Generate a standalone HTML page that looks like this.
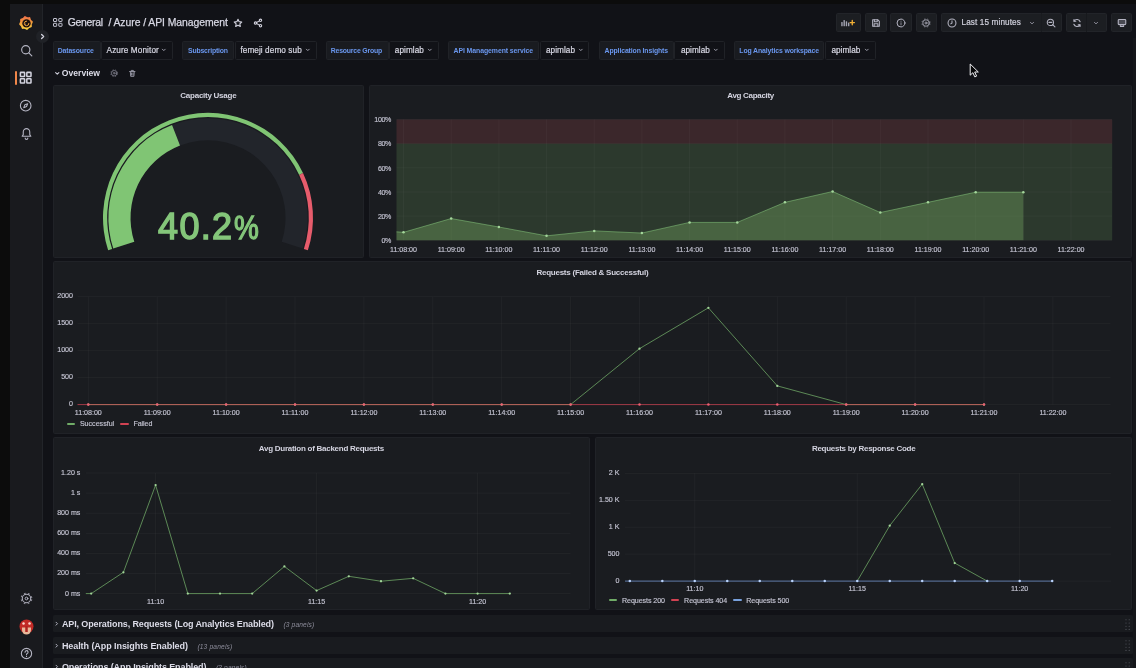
<!DOCTYPE html>
<html lang="en"><head><meta charset="utf-8"><title>Azure / API Management - Grafana</title>
<style>
html,body{margin:0;padding:0;background:#0c0c0c;}
body{width:1136px;height:668px;overflow:hidden;position:relative;font-family:"Liberation Sans", sans-serif;}
.b{position:absolute;display:block;}
.t{position:absolute;white-space:pre;font-family:"Liberation Sans", sans-serif;}
svg{overflow:visible}
</style></head>
<body>
<div id="app" style="position:absolute;left:0;top:0;width:1136px;height:668px;will-change:transform;">
<!-- app frame -->
<div class="b" style="left:10px;top:4px;width:1126px;height:664px;background:#111217;"></div>
<div class="b" style="left:1133px;top:38px;width:3px;height:630px;background:#15161a;"></div>
<div class="b" style="left:10px;top:4px;width:33px;height:664px;background:#191a1e;border-right:1px solid #222429;box-sizing:border-box;"></div>
<svg class="b" style="left:19.3px;top:15.9px" width="14" height="14" viewBox="0 0 28 28">
<defs><linearGradient id="lg" x1="0" y1="0" x2="0" y2="1"><stop offset="0" stop-color="#ee6f4c"/><stop offset="0.450" stop-color="#f39a3c"/><stop offset="1" stop-color="#fbd63f"/></linearGradient></defs>
<path fill="url(#lg)" d="M9.67 1.79Q11.36 -0.97 13.89 1.05Q16.42 3.07 19.57 2.31Q22.72 1.55 23.08 4.77Q23.45 7.98 26.21 9.67Q28.97 11.36 26.95 13.89Q24.93 16.42 25.69 19.57Q26.45 22.72 23.23 23.08Q20.02 23.45 18.33 26.21Q16.64 28.97 14.11 26.95Q11.58 24.93 8.43 25.69Q5.28 26.45 4.92 23.23Q4.55 20.02 1.79 18.33Q-0.97 16.64 1.05 14.11Q3.07 11.58 2.31 8.43Q1.55 5.28 4.77 4.92Q7.98 4.55 9.67 1.79Z"/>
<circle cx="15" cy="14.800" r="8.400" fill="#1d120f"/>
<path d="M15.200 10.200a4.600 4.600 0 1 0 4.600 4.600" fill="none" stroke="#f5a93b" stroke-width="1.900" stroke-linecap="round"/>
<circle cx="13" cy="16" r="0.900" fill="#e9c9c0"/>
</svg>
<div class="b" style="left:36px;top:29.500px;width:13px;height:13px;border-radius:50%;background:#202227;"></div>
<svg class="b" style="left:39px;top:32.5px" width="7" height="7" viewBox="0 0 24 24" fill="none" stroke="#d4d4e0" stroke-width="4.29" stroke-linecap="round" stroke-linejoin="round"><path d="M9 5l7 7-7 7"/></svg>
<svg class="b" style="left:19.5px;top:43.8px" width="13.2" height="13.2" viewBox="0 0 24 24" fill="none" stroke="#b4b4c2" stroke-width="2.09" stroke-linecap="round" stroke-linejoin="round"><circle cx="10.500" cy="10.500" r="7.500"/><path d="M16 16l5.500 5.500"/></svg>
<div class="b" style="left:15px;top:71px;width:2px;height:14px;background:#f2874a;border-radius:1px;"></div>
<svg class="b" style="left:19.4px;top:71.3px" width="13.4" height="13.4" viewBox="0 0 24 24" fill="none" stroke="#d2d2de" stroke-width="2.78" stroke-linecap="round" stroke-linejoin="round"><rect x="2.500" y="2.500" width="7.500" height="7.500" rx="1"/><rect x="14" y="2.500" width="7.500" height="7.500" rx="1"/><rect x="2.500" y="14" width="7.500" height="7.500" rx="1"/><rect x="14" y="14" width="7.500" height="7.500" rx="1"/></svg>
<svg class="b" style="left:19.4px;top:99.0px" width="13.4" height="13.4" viewBox="0 0 24 24" fill="none" stroke="#b4b4c2" stroke-width="1.97" stroke-linecap="round" stroke-linejoin="round"><circle cx="12" cy="12" r="9.500"/><path d="M15.500 8.500l-2 5-5 2 2-5z"/></svg>
<svg class="b" style="left:20px;top:127px" width="13" height="13" viewBox="0 0 24 24" fill="none" stroke="#b4b4c2" stroke-width="2.03" stroke-linecap="round" stroke-linejoin="round"><path d="M12 3a6 6 0 0 0-6 6v5l-2 3h16l-2-3V9a6 6 0 0 0-6-6z"/><path d="M9.500 20.500a2.500 2.500 0 0 0 5 0"/></svg>
<svg class="b" style="left:20px;top:591.5px" width="13" height="13" viewBox="0 0 24 24" fill="none" stroke="#b4b4c2" stroke-width="2.03" stroke-linecap="round" stroke-linejoin="round"><circle cx="12" cy="12" r="9.800" stroke-width="2" stroke-dasharray="3.300 4.397" stroke-linecap="butt" stroke-opacity="0.750" transform="rotate(10 12 12)"/><circle cx="12" cy="12" r="7.800" stroke-width="1.900"/><circle cx="12" cy="12" r="2.500" stroke-width="1.800"/></svg>
<svg class="b" style="left:19px;top:619px" width="15" height="15" viewBox="0 0 30 30">
<circle cx="15" cy="15" r="14" fill="#c22a26"/>
<path d="M6 17h18v5a9 9 0 0 1-18 0z" fill="#e9b79a"/>
<rect x="12.500" y="14" width="5" height="12" fill="#b02420"/>
<circle cx="9" cy="9" r="2.500" fill="#ffd9cf"/><circle cx="21" cy="9" r="2.500" fill="#ffd9cf"/>
</svg>
<svg class="b" style="left:20px;top:647px" width="13" height="13" viewBox="0 0 24 24" fill="none" stroke="#b4b4c2" stroke-width="2.03" stroke-linecap="round" stroke-linejoin="round"><circle cx="12" cy="12" r="9.500"/><path d="M9.300 9.500a2.800 2.800 0 1 1 4 2.600c-.9.500-1.300 1-1.300 2"/><path d="M12 17.300v.2"/></svg>
<svg class="b" style="left:53px;top:18px" width="10" height="9" viewBox="0 0 10 9" fill="none" stroke="#c4c4d2" stroke-width="1"><rect x="0.500" y="0.500" width="3.200" height="3" rx="0.400"/><rect x="5.800" y="0.500" width="3.200" height="3" rx="0.400"/><rect x="0.500" y="5.300" width="3.200" height="3" rx="0.400"/><rect x="5.800" y="5.300" width="3.200" height="3" rx="0.400"/></svg>
<span class="t" style="left:67.70px;top:15.98px;font-size:10.4px;line-height:13.0px;color:#d8d8e4;-webkit-text-stroke:0.25px #d8d8e4;letter-spacing:-0.281px;">General</span>
<span class="t" style="left:108.40px;top:15.98px;font-size:10.4px;line-height:13.0px;color:#d8d8e4;-webkit-text-stroke:0.25px #d8d8e4;letter-spacing:-0.055px;">/ Azure / API Management</span>
<svg class="b" style="left:233px;top:17.5px" width="10" height="10" viewBox="0 0 24 24" fill="none" stroke="#d0d0dc" stroke-width="2.64" stroke-linecap="round" stroke-linejoin="round"><path d="M12 3l2.700 5.800 6.300.8-4.600 4.400 1.200 6.300L12 17.200 6.400 20.300l1.200-6.300L3 9.600l6.300-.8z"/></svg>
<svg class="b" style="left:252.5px;top:17.5px" width="10" height="10" viewBox="0 0 24 24" fill="none" stroke="#d0d0dc" stroke-width="2.64" stroke-linecap="round" stroke-linejoin="round"><circle cx="18" cy="5.500" r="2.800"/><circle cx="6" cy="12" r="2.800"/><circle cx="18" cy="18.500" r="2.800"/><path d="M8.500 10.700l7-3.800M8.500 13.300l7 3.800"/></svg>
<div class="b" style="left:836px;top:13px;width:24.5px;height:19px;background:#1c1e22;border:1px solid #222429;box-sizing:border-box;border-radius:1.5px;"></div>
<div class="b" style="left:865px;top:13px;width:21.5px;height:19px;background:#1c1e22;border:1px solid #222429;box-sizing:border-box;border-radius:1.5px;"></div>
<div class="b" style="left:890px;top:13px;width:21.5px;height:19px;background:#1c1e22;border:1px solid #222429;box-sizing:border-box;border-radius:1.5px;"></div>
<div class="b" style="left:915.5px;top:13px;width:21.5px;height:19px;background:#1c1e22;border:1px solid #222429;box-sizing:border-box;border-radius:1.5px;"></div>
<svg class="b" style="left:841px;top:19px" width="14" height="8" viewBox="0 0 28 16"><g fill="#a4a4b2"><rect x="0.500" y="6" width="2.800" height="8.500" rx="1"/><rect x="5" y="2" width="2.800" height="12.500" rx="1"/><rect x="9.500" y="4.500" width="2.800" height="10" rx="1"/><rect x="14" y="7" width="2.800" height="7.500" rx="1"/></g><path d="M22.500 3v8.500M18.300 7.200h8.500" stroke="#f2b035" stroke-width="2.700" stroke-linecap="round"/></svg>
<svg class="b" style="left:870.5px;top:17.5px" width="10" height="10" viewBox="0 0 24 24" fill="none" stroke="#b4b4c2" stroke-width="2.52" stroke-linecap="round" stroke-linejoin="round"><path d="M4 4h12l4 4v12H4z"/><path d="M8 4v5h7V4M7.500 20v-6h9v6"/></svg>
<svg class="b" style="left:895.5px;top:17.5px" width="10" height="10" viewBox="0 0 24 24" fill="none" stroke="#b4b4c2" stroke-width="2.40" stroke-linecap="round" stroke-linejoin="round"><circle cx="12" cy="12" r="9.500"/><path d="M12 11.500v5" stroke-width="1.700"/><path d="M12 7.600v.1" stroke-width="2.100"/></svg>
<svg class="b" style="left:921px;top:17.5px" width="10" height="10" viewBox="0 0 24 24" fill="none" stroke="#b4b4c2" stroke-width="2.52" stroke-linecap="round" stroke-linejoin="round"><circle cx="12" cy="12" r="9.800" stroke-width="2" stroke-dasharray="3.300 4.397" stroke-linecap="butt" stroke-opacity="0.750" transform="rotate(10 12 12)"/><circle cx="12" cy="12" r="7.800" stroke-width="1.900"/><circle cx="12" cy="12" r="2.500" stroke-width="1.800"/></svg>
<div class="b" style="left:941px;top:13px;width:121px;height:19px;background:#1c1e22;border:1px solid #222429;box-sizing:border-box;border-radius:1.5px;"></div>
<div class="b" style="left:1041px;top:13px;width:1px;height:19px;background:#191b1f;"></div>
<svg class="b" style="left:946.5px;top:17.5px" width="10" height="10" viewBox="0 0 24 24" fill="none" stroke="#b4b4c2" stroke-width="2.52" stroke-linecap="round" stroke-linejoin="round"><circle cx="12" cy="12" r="9.500"/><path d="M12 6.500V12l-3 2"/></svg>
<span class="t" style="left:961.50px;top:17.98px;font-size:8.2px;line-height:10.25px;color:#d0d0dc;-webkit-text-stroke:0.2px #d0d0dc;letter-spacing:0.113px;">Last 15 minutes</span>
<svg class="b" style="left:1028.5px;top:19.6px" width="6.0" height="6.0" viewBox="0 0 24 24" fill="none" stroke="#9c9caa" stroke-width="3.80" stroke-linecap="round" stroke-linejoin="round"><path d="M6 9.500l6 6 6-6"/></svg>
<svg class="b" style="left:1046px;top:17.5px" width="10" height="10" viewBox="0 0 24 24" fill="none" stroke="#b4b4c2" stroke-width="2.52" stroke-linecap="round" stroke-linejoin="round"><circle cx="10.500" cy="10.500" r="7.500"/><path d="M16 16l5.500 5.500M7 10.500h7"/></svg>
<div class="b" style="left:1066px;top:13px;width:40.5px;height:19px;background:#1c1e22;border:1px solid #222429;box-sizing:border-box;border-radius:1.5px;"></div>
<div class="b" style="left:1086px;top:13px;width:1px;height:19px;background:#17191d;"></div>
<svg class="b" style="left:1071.5px;top:17.5px" width="10" height="10" viewBox="0 0 24 24" fill="none" stroke="#b4b4c2" stroke-width="2.76" stroke-linecap="round" stroke-linejoin="round"><path d="M19.500 9A8 8 0 0 0 5 7.500M4.500 15A8 8 0 0 0 19 16.500"/><path d="M4.800 3.500v4.300h4.300M19.200 20.500v-4.300h-4.300"/></svg>
<svg class="b" style="left:1093.3px;top:19.6px" width="6.0" height="6.0" viewBox="0 0 24 24" fill="none" stroke="#9c9caa" stroke-width="3.80" stroke-linecap="round" stroke-linejoin="round"><path d="M6 9.500l6 6 6-6"/></svg>
<div class="b" style="left:1111px;top:13px;width:21px;height:19px;background:#1c1e22;border:1px solid #222429;box-sizing:border-box;border-radius:1.5px;"></div>
<svg class="b" style="left:1116.5px;top:17.5px" width="10" height="10" viewBox="0 0 24 24" fill="none" stroke="#b4b4c2" stroke-width="2.64" stroke-linecap="round" stroke-linejoin="round"><rect x="3" y="3.500" width="18" height="12.500" rx="2" fill="#b4b4c2" fill-opacity="0.300"/><path d="M8 20.500h8M9.500 16l-1 4.500M14.500 16l1 4.500"/></svg>
<div class="b" style="left:52.5px;top:41.3px;width:48px;height:18.3px;background:#191b20;border:1px solid #202227;box-sizing:border-box;border-radius:1.5px;"></div><span class="t" style="left:57.80px;top:46.98px;font-size:6.9px;line-height:8.62px;color:#6a97ee;font-weight:700;letter-spacing:-0.155px;">Datasource</span><div class="b" style="left:101px;top:41.3px;width:72px;height:18.3px;background:#111217;border:1px solid #202227;box-sizing:border-box;border-radius:1.5px;"></div><span class="t" style="left:106.60px;top:45.98px;font-size:8.2px;line-height:10.25px;color:#d8d8e4;-webkit-text-stroke:0.2px #d8d8e4;letter-spacing:0.102px;">Azure Monitor</span><svg class="b" style="left:161.1px;top:47.4px" width="5.6" height="5.6" viewBox="0 0 24 24" fill="none" stroke="#a4a4b2" stroke-width="4.07" stroke-linecap="round" stroke-linejoin="round"><path d="M6 9.500l6 6 6-6"/></svg>
<div class="b" style="left:182px;top:41.3px;width:52px;height:18.3px;background:#191b20;border:1px solid #202227;box-sizing:border-box;border-radius:1.5px;"></div><span class="t" style="left:188.00px;top:46.98px;font-size:6.9px;line-height:8.62px;color:#6a97ee;font-weight:700;letter-spacing:-0.185px;">Subscription</span><div class="b" style="left:234.5px;top:41.3px;width:82.5px;height:18.3px;background:#111217;border:1px solid #202227;box-sizing:border-box;border-radius:1.5px;"></div><span class="t" style="left:240.40px;top:45.98px;font-size:8.2px;line-height:10.25px;color:#d8d8e4;-webkit-text-stroke:0.2px #d8d8e4;letter-spacing:0.088px;">femeji demo sub</span><svg class="b" style="left:304.5px;top:47.4px" width="5.6" height="5.6" viewBox="0 0 24 24" fill="none" stroke="#a4a4b2" stroke-width="4.07" stroke-linecap="round" stroke-linejoin="round"><path d="M6 9.500l6 6 6-6"/></svg>
<div class="b" style="left:325.5px;top:41.3px;width:63px;height:18.3px;background:#191b20;border:1px solid #202227;box-sizing:border-box;border-radius:1.5px;"></div><span class="t" style="left:330.80px;top:46.98px;font-size:6.9px;line-height:8.62px;color:#6a97ee;font-weight:700;letter-spacing:-0.200px;">Resource Group</span><div class="b" style="left:389px;top:41.3px;width:49.5px;height:18.3px;background:#111217;border:1px solid #202227;box-sizing:border-box;border-radius:1.5px;"></div><span class="t" style="left:394.80px;top:45.98px;font-size:8.2px;line-height:10.25px;color:#d8d8e4;-webkit-text-stroke:0.2px #d8d8e4;letter-spacing:0.059px;">apimlab</span><svg class="b" style="left:426.7px;top:47.4px" width="5.6" height="5.6" viewBox="0 0 24 24" fill="none" stroke="#a4a4b2" stroke-width="4.07" stroke-linecap="round" stroke-linejoin="round"><path d="M6 9.500l6 6 6-6"/></svg>
<div class="b" style="left:447.5px;top:41.3px;width:91.5px;height:18.3px;background:#191b20;border:1px solid #202227;box-sizing:border-box;border-radius:1.5px;"></div><span class="t" style="left:453.50px;top:46.98px;font-size:6.9px;line-height:8.62px;color:#6a97ee;font-weight:700;letter-spacing:-0.073px;">API Management service</span><div class="b" style="left:539.5px;top:41.3px;width:49.5px;height:18.3px;background:#111217;border:1px solid #202227;box-sizing:border-box;border-radius:1.5px;"></div><span class="t" style="left:546.00px;top:45.98px;font-size:8.2px;line-height:10.25px;color:#d8d8e4;-webkit-text-stroke:0.2px #d8d8e4;letter-spacing:0.059px;">apimlab</span><svg class="b" style="left:577.8px;top:47.4px" width="5.6" height="5.6" viewBox="0 0 24 24" fill="none" stroke="#a4a4b2" stroke-width="4.07" stroke-linecap="round" stroke-linejoin="round"><path d="M6 9.500l6 6 6-6"/></svg>
<div class="b" style="left:599px;top:41.3px;width:74.5px;height:18.3px;background:#191b20;border:1px solid #202227;box-sizing:border-box;border-radius:1.5px;"></div><span class="t" style="left:604.60px;top:46.98px;font-size:6.9px;line-height:8.62px;color:#6a97ee;font-weight:700;letter-spacing:-0.123px;">Application Insights</span><div class="b" style="left:674.2px;top:41.3px;width:50.5px;height:18.3px;background:#111217;border:1px solid #202227;box-sizing:border-box;border-radius:1.5px;"></div><span class="t" style="left:680.90px;top:45.98px;font-size:8.2px;line-height:10.25px;color:#d8d8e4;-webkit-text-stroke:0.2px #d8d8e4;letter-spacing:0.059px;">apimlab</span><svg class="b" style="left:713.2px;top:47.4px" width="5.6" height="5.6" viewBox="0 0 24 24" fill="none" stroke="#a4a4b2" stroke-width="4.07" stroke-linecap="round" stroke-linejoin="round"><path d="M6 9.500l6 6 6-6"/></svg>
<div class="b" style="left:734.3px;top:41.3px;width:90.2px;height:18.3px;background:#191b20;border:1px solid #202227;box-sizing:border-box;border-radius:1.5px;"></div><span class="t" style="left:739.30px;top:46.98px;font-size:6.9px;line-height:8.62px;color:#6a97ee;font-weight:700;letter-spacing:-0.120px;">Log Analytics workspace</span><div class="b" style="left:825.4px;top:41.3px;width:50.6px;height:18.3px;background:#111217;border:1px solid #202227;box-sizing:border-box;border-radius:1.5px;"></div><span class="t" style="left:831.40px;top:45.98px;font-size:8.2px;line-height:10.25px;color:#d8d8e4;-webkit-text-stroke:0.2px #d8d8e4;letter-spacing:0.059px;">apimlab</span><svg class="b" style="left:863.9px;top:47.4px" width="5.6" height="5.6" viewBox="0 0 24 24" fill="none" stroke="#a4a4b2" stroke-width="4.07" stroke-linecap="round" stroke-linejoin="round"><path d="M6 9.500l6 6 6-6"/></svg>
<svg class="b" style="left:53.6px;top:70.1px" width="6.5" height="6.5" viewBox="0 0 24 24" fill="none" stroke="#d0d0dc" stroke-width="4.06" stroke-linecap="round" stroke-linejoin="round"><path d="M6 9.500l6 6 6-6"/></svg>
<span class="t" style="left:61.80px;top:67.97px;font-size:8.6px;line-height:10.75px;color:#dcdce8;font-weight:700;letter-spacing:-0.002px;">Overview</span>
<svg class="b" style="left:110px;top:69.0px" width="8.4" height="8.4" viewBox="0 0 24 24" fill="none" stroke="#9696a4" stroke-width="2.71" stroke-linecap="round" stroke-linejoin="round"><circle cx="12" cy="12" r="9.800" stroke-width="2" stroke-dasharray="3.300 4.397" stroke-linecap="butt" stroke-opacity="0.750" transform="rotate(10 12 12)"/><circle cx="12" cy="12" r="7.800" stroke-width="1.900"/><circle cx="12" cy="12" r="2.500" stroke-width="1.800"/></svg>
<svg class="b" style="left:128.4px;top:69.0px" width="8.6" height="8.6" viewBox="0 0 24 24" fill="none" stroke="#9696a4" stroke-width="2.65" stroke-linecap="round" stroke-linejoin="round"><path d="M4.500 7h15M9 7V4h6v3M6.500 7l1 13.500h9l1-13.500M10 11v6M14 11v6"/></svg>
<!-- Capacity Usage -->
<div class="b" style="left:52.5px;top:85.2px;width:311.7px;height:173.2px;background:#1a1c20;border:1px solid #202227;box-sizing:border-box;border-radius:1.5px;"></div><span class="t" style="left:180.35px;top:90.97px;font-size:8.0px;line-height:10.0px;color:#d4d4e0;font-weight:700;letter-spacing:-0.257px;">Capacity Usage</span>
<svg class="b" style="left:0px;top:0px;" width="1136" height="668" viewBox="0 0 1136 668"><path fill="#80c574" d="M108.14 250.25A105.0 105.0 0 0 1 303.01 173.09L299.21 174.88A100.8 100.8 0 0 0 112.13 248.95Z"/><path fill="#e75c6c" d="M303.01 173.09A105.0 105.0 0 0 1 307.86 250.25L303.87 248.95A100.8 100.8 0 0 0 299.21 174.88Z"/><path fill="#22252b" d="M113.27 248.58A99.6 99.6 0 1 1 302.73 248.58L281.71 241.75A77.5 77.5 0 1 0 134.29 241.75Z"/><path fill="#80c574" d="M113.27 248.58A99.6 99.6 0 0 1 172.03 124.92L180.01 145.53A77.5 77.5 0 0 0 134.29 241.75Z"/></svg>
<span class="t" style="left:158.1px;top:204.2px;font-size:36px;line-height:45px;color:#84c67a;letter-spacing:1.3px;-webkit-text-stroke:1.4px #84c67a;">40.2</span>
<span class="t" style="left:234.2px;top:204.2px;font-size:36px;line-height:45px;color:#84c67a;-webkit-text-stroke:1.4px #84c67a;transform:scale(0.775,0.92);transform-origin:0 36px;">%</span>
<!-- Avg Capacity -->
<div class="b" style="left:369px;top:85.2px;width:763.3px;height:173.2px;background:#1a1c20;border:1px solid #202227;box-sizing:border-box;border-radius:1.5px;"></div><span class="t" style="left:727.30px;top:90.97px;font-size:8.0px;line-height:10.0px;color:#d4d4e0;font-weight:700;letter-spacing:-0.308px;">Avg Capacity</span>
<svg class="b" style="left:0px;top:0px;" width="1136" height="668" viewBox="0 0 1136 668"><rect x="396.5" y="119.5" width="715.7" height="24.16" fill="#e85f66" fill-opacity="0.165"/><rect x="396.5" y="143.66" width="715.7" height="96.64" fill="#78b267" fill-opacity="0.195"/><path d="M396.5 240.30H1112.2" stroke="rgba(204,204,220,0.045)" stroke-width="1"/><path d="M396.5 216.14H1112.2" stroke="rgba(204,204,220,0.045)" stroke-width="1"/><path d="M396.5 191.98H1112.2" stroke="rgba(204,204,220,0.045)" stroke-width="1"/><path d="M396.5 167.82H1112.2" stroke="rgba(204,204,220,0.045)" stroke-width="1"/><path d="M396.5 143.66H1112.2" stroke="rgba(204,204,220,0.045)" stroke-width="1"/><path d="M396.5 119.50H1112.2" stroke="rgba(204,204,220,0.045)" stroke-width="1"/><path d="M403.50 119.5V240.3" stroke="rgba(204,204,220,0.045)" stroke-width="1"/><path d="M451.18 119.5V240.3" stroke="rgba(204,204,220,0.045)" stroke-width="1"/><path d="M498.86 119.5V240.3" stroke="rgba(204,204,220,0.045)" stroke-width="1"/><path d="M546.54 119.5V240.3" stroke="rgba(204,204,220,0.045)" stroke-width="1"/><path d="M594.22 119.5V240.3" stroke="rgba(204,204,220,0.045)" stroke-width="1"/><path d="M641.90 119.5V240.3" stroke="rgba(204,204,220,0.045)" stroke-width="1"/><path d="M689.58 119.5V240.3" stroke="rgba(204,204,220,0.045)" stroke-width="1"/><path d="M737.26 119.5V240.3" stroke="rgba(204,204,220,0.045)" stroke-width="1"/><path d="M784.94 119.5V240.3" stroke="rgba(204,204,220,0.045)" stroke-width="1"/><path d="M832.62 119.5V240.3" stroke="rgba(204,204,220,0.045)" stroke-width="1"/><path d="M880.30 119.5V240.3" stroke="rgba(204,204,220,0.045)" stroke-width="1"/><path d="M927.98 119.5V240.3" stroke="rgba(204,204,220,0.045)" stroke-width="1"/><path d="M975.66 119.5V240.3" stroke="rgba(204,204,220,0.045)" stroke-width="1"/><path d="M1023.34 119.5V240.3" stroke="rgba(204,204,220,0.045)" stroke-width="1"/><path d="M1071.02 119.5V240.3" stroke="rgba(204,204,220,0.045)" stroke-width="1"/><path d="M396.50 231.84L403.50 232.33L451.18 218.56L498.86 227.01L546.54 235.83L594.22 230.88L641.90 233.05L689.58 222.42L737.26 222.42L784.94 202.37L832.62 191.50L880.30 212.52L927.98 202.37L975.66 192.22L1023.34 192.22L1023.34 240.3L396.5 240.3Z" fill="#86c26e" fill-opacity="0.31"/><path d="M396.50 231.84L403.50 232.33L451.18 218.56L498.86 227.01L546.54 235.83L594.22 230.88L641.90 233.05L689.58 222.42L737.26 222.42L784.94 202.37L832.62 191.50L880.30 212.52L927.98 202.37L975.66 192.22L1023.34 192.22" fill="none" stroke="#86c77c" stroke-width="0.9" stroke-linejoin="round" stroke-opacity="0.6"/><circle cx="403.50" cy="232.33" r="1.25" fill="#a4d79b"/><circle cx="451.18" cy="218.56" r="1.25" fill="#a4d79b"/><circle cx="498.86" cy="227.01" r="1.25" fill="#a4d79b"/><circle cx="546.54" cy="235.83" r="1.25" fill="#a4d79b"/><circle cx="594.22" cy="230.88" r="1.25" fill="#a4d79b"/><circle cx="641.90" cy="233.05" r="1.25" fill="#a4d79b"/><circle cx="689.58" cy="222.42" r="1.25" fill="#a4d79b"/><circle cx="737.26" cy="222.42" r="1.25" fill="#a4d79b"/><circle cx="784.94" cy="202.37" r="1.25" fill="#a4d79b"/><circle cx="832.62" cy="191.50" r="1.25" fill="#a4d79b"/><circle cx="880.30" cy="212.52" r="1.25" fill="#a4d79b"/><circle cx="927.98" cy="202.37" r="1.25" fill="#a4d79b"/><circle cx="975.66" cy="192.22" r="1.25" fill="#a4d79b"/><circle cx="1023.34" cy="192.22" r="1.25" fill="#a4d79b"/></svg>
<span class="t" style="left:381.56px;top:236.97px;font-size:7.1px;line-height:8.88px;color:#c4c4d2;-webkit-text-stroke:0.15px #c4c4d2;letter-spacing:-0.411px;">0%</span><span class="t" style="left:377.93px;top:212.97px;font-size:7.1px;line-height:8.88px;color:#c4c4d2;-webkit-text-stroke:0.15px #c4c4d2;letter-spacing:-0.379px;">20%</span><span class="t" style="left:377.93px;top:188.97px;font-size:7.1px;line-height:8.88px;color:#c4c4d2;-webkit-text-stroke:0.15px #c4c4d2;letter-spacing:-0.379px;">40%</span><span class="t" style="left:377.93px;top:164.97px;font-size:7.1px;line-height:8.88px;color:#c4c4d2;-webkit-text-stroke:0.15px #c4c4d2;letter-spacing:-0.379px;">60%</span><span class="t" style="left:377.93px;top:139.97px;font-size:7.1px;line-height:8.88px;color:#c4c4d2;-webkit-text-stroke:0.15px #c4c4d2;letter-spacing:-0.379px;">80%</span><span class="t" style="left:374.30px;top:115.98px;font-size:7.1px;line-height:8.88px;color:#c4c4d2;-webkit-text-stroke:0.15px #c4c4d2;letter-spacing:-0.363px;">100%</span><span class="t" style="left:390.00px;top:245.97px;font-size:7.1px;line-height:8.88px;color:#c4c4d2;-webkit-text-stroke:0.15px #c4c4d2;letter-spacing:-0.012px;">11:08:00</span><span class="t" style="left:437.68px;top:245.97px;font-size:7.1px;line-height:8.88px;color:#c4c4d2;-webkit-text-stroke:0.15px #c4c4d2;letter-spacing:-0.012px;">11:09:00</span><span class="t" style="left:485.36px;top:245.97px;font-size:7.1px;line-height:8.88px;color:#c4c4d2;-webkit-text-stroke:0.15px #c4c4d2;letter-spacing:-0.012px;">11:10:00</span><span class="t" style="left:533.04px;top:245.97px;font-size:7.1px;line-height:8.88px;color:#c4c4d2;-webkit-text-stroke:0.15px #c4c4d2;letter-spacing:0.055px;">11:11:00</span><span class="t" style="left:580.72px;top:245.97px;font-size:7.1px;line-height:8.88px;color:#c4c4d2;-webkit-text-stroke:0.15px #c4c4d2;letter-spacing:-0.012px;">11:12:00</span><span class="t" style="left:628.40px;top:245.97px;font-size:7.1px;line-height:8.88px;color:#c4c4d2;-webkit-text-stroke:0.15px #c4c4d2;letter-spacing:-0.012px;">11:13:00</span><span class="t" style="left:676.08px;top:245.97px;font-size:7.1px;line-height:8.88px;color:#c4c4d2;-webkit-text-stroke:0.15px #c4c4d2;letter-spacing:-0.012px;">11:14:00</span><span class="t" style="left:723.76px;top:245.97px;font-size:7.1px;line-height:8.88px;color:#c4c4d2;-webkit-text-stroke:0.15px #c4c4d2;letter-spacing:-0.012px;">11:15:00</span><span class="t" style="left:771.44px;top:245.97px;font-size:7.1px;line-height:8.88px;color:#c4c4d2;-webkit-text-stroke:0.15px #c4c4d2;letter-spacing:-0.012px;">11:16:00</span><span class="t" style="left:819.12px;top:245.97px;font-size:7.1px;line-height:8.88px;color:#c4c4d2;-webkit-text-stroke:0.15px #c4c4d2;letter-spacing:-0.012px;">11:17:00</span><span class="t" style="left:866.80px;top:245.97px;font-size:7.1px;line-height:8.88px;color:#c4c4d2;-webkit-text-stroke:0.15px #c4c4d2;letter-spacing:-0.012px;">11:18:00</span><span class="t" style="left:914.48px;top:245.97px;font-size:7.1px;line-height:8.88px;color:#c4c4d2;-webkit-text-stroke:0.15px #c4c4d2;letter-spacing:-0.012px;">11:19:00</span><span class="t" style="left:962.16px;top:245.97px;font-size:7.1px;line-height:8.88px;color:#c4c4d2;-webkit-text-stroke:0.15px #c4c4d2;letter-spacing:-0.012px;">11:20:00</span><span class="t" style="left:1009.84px;top:245.97px;font-size:7.1px;line-height:8.88px;color:#c4c4d2;-webkit-text-stroke:0.15px #c4c4d2;letter-spacing:-0.012px;">11:21:00</span><span class="t" style="left:1057.52px;top:245.97px;font-size:7.1px;line-height:8.88px;color:#c4c4d2;-webkit-text-stroke:0.15px #c4c4d2;letter-spacing:-0.012px;">11:22:00</span>
<!-- Requests (Failed & Successful) -->
<div class="b" style="left:52.5px;top:261.1px;width:1079.8px;height:172.9px;background:#1a1c20;border:1px solid #202227;box-sizing:border-box;border-radius:1.5px;"></div><span class="t" style="left:536.40px;top:267.98px;font-size:8.0px;line-height:10.0px;color:#d4d4e0;font-weight:700;letter-spacing:-0.239px;">Requests (Failed &amp; Successful)</span>
<svg class="b" style="left:0px;top:0px;" width="1136" height="668" viewBox="0 0 1136 668"><path d="M77.5 404.60H1110.5" stroke="rgba(204,204,220,0.045)" stroke-width="1"/><path d="M77.5 377.62H1110.5" stroke="rgba(204,204,220,0.045)" stroke-width="1"/><path d="M77.5 350.65H1110.5" stroke="rgba(204,204,220,0.045)" stroke-width="1"/><path d="M77.5 323.68H1110.5" stroke="rgba(204,204,220,0.045)" stroke-width="1"/><path d="M77.5 296.70H1110.5" stroke="rgba(204,204,220,0.045)" stroke-width="1"/><path d="M88.30 296.7V404.6" stroke="rgba(204,204,220,0.045)" stroke-width="1"/><path d="M157.20 296.7V404.6" stroke="rgba(204,204,220,0.045)" stroke-width="1"/><path d="M226.10 296.7V404.6" stroke="rgba(204,204,220,0.045)" stroke-width="1"/><path d="M295.00 296.7V404.6" stroke="rgba(204,204,220,0.045)" stroke-width="1"/><path d="M363.90 296.7V404.6" stroke="rgba(204,204,220,0.045)" stroke-width="1"/><path d="M432.80 296.7V404.6" stroke="rgba(204,204,220,0.045)" stroke-width="1"/><path d="M501.70 296.7V404.6" stroke="rgba(204,204,220,0.045)" stroke-width="1"/><path d="M570.60 296.7V404.6" stroke="rgba(204,204,220,0.045)" stroke-width="1"/><path d="M639.50 296.7V404.6" stroke="rgba(204,204,220,0.045)" stroke-width="1"/><path d="M708.40 296.7V404.6" stroke="rgba(204,204,220,0.045)" stroke-width="1"/><path d="M777.30 296.7V404.6" stroke="rgba(204,204,220,0.045)" stroke-width="1"/><path d="M846.20 296.7V404.6" stroke="rgba(204,204,220,0.045)" stroke-width="1"/><path d="M915.10 296.7V404.6" stroke="rgba(204,204,220,0.045)" stroke-width="1"/><path d="M984.00 296.7V404.6" stroke="rgba(204,204,220,0.045)" stroke-width="1"/><path d="M1052.90 296.7V404.6" stroke="rgba(204,204,220,0.045)" stroke-width="1"/><path d="M88.30 404.60L157.20 404.60L226.10 404.60L295.00 404.60L363.90 404.60L432.80 404.60L501.70 404.60L570.60 404.60L639.50 348.65L708.40 307.81L777.30 385.88L846.20 404.60L915.10 404.60L984.00 404.60" fill="none" stroke="#80c574" stroke-width="0.9" stroke-linejoin="round" stroke-opacity="0.72"/><circle cx="88.30" cy="404.60" r="1.15" fill="#a2d699"/><circle cx="157.20" cy="404.60" r="1.15" fill="#a2d699"/><circle cx="226.10" cy="404.60" r="1.15" fill="#a2d699"/><circle cx="295.00" cy="404.60" r="1.15" fill="#a2d699"/><circle cx="363.90" cy="404.60" r="1.15" fill="#a2d699"/><circle cx="432.80" cy="404.60" r="1.15" fill="#a2d699"/><circle cx="501.70" cy="404.60" r="1.15" fill="#a2d699"/><circle cx="570.60" cy="404.60" r="1.15" fill="#a2d699"/><circle cx="639.50" cy="348.65" r="1.15" fill="#a2d699"/><circle cx="708.40" cy="307.81" r="1.15" fill="#a2d699"/><circle cx="777.30" cy="385.88" r="1.15" fill="#a2d699"/><circle cx="846.20" cy="404.60" r="1.15" fill="#a2d699"/><circle cx="915.10" cy="404.60" r="1.15" fill="#a2d699"/><circle cx="984.00" cy="404.60" r="1.15" fill="#a2d699"/><path d="M77.50 404.60L88.30 404.60L157.20 404.60L226.10 404.60L295.00 404.60L363.90 404.60L432.80 404.60L501.70 404.60L570.60 404.60L639.50 404.60L708.40 404.60L777.30 404.60L846.20 404.60L915.10 404.60L984.00 404.60" fill="none" stroke="#f2495c" stroke-width="1.0" stroke-linejoin="round" stroke-opacity="0.62"/><circle cx="88.30" cy="404.60" r="1.25" fill="#ee5f72"/><circle cx="157.20" cy="404.60" r="1.25" fill="#ee5f72"/><circle cx="226.10" cy="404.60" r="1.25" fill="#ee5f72"/><circle cx="295.00" cy="404.60" r="1.25" fill="#ee5f72"/><circle cx="363.90" cy="404.60" r="1.25" fill="#ee5f72"/><circle cx="432.80" cy="404.60" r="1.25" fill="#ee5f72"/><circle cx="501.70" cy="404.60" r="1.25" fill="#ee5f72"/><circle cx="570.60" cy="404.60" r="1.25" fill="#ee5f72"/><circle cx="639.50" cy="404.60" r="1.25" fill="#ee5f72"/><circle cx="708.40" cy="404.60" r="1.25" fill="#ee5f72"/><circle cx="777.30" cy="404.60" r="1.25" fill="#ee5f72"/><circle cx="846.20" cy="404.60" r="1.25" fill="#ee5f72"/><circle cx="915.10" cy="404.60" r="1.25" fill="#ee5f72"/><circle cx="984.00" cy="404.60" r="1.25" fill="#ee5f72"/></svg>
<span class="t" style="left:69.05px;top:399.98px;font-size:7.1px;line-height:8.88px;color:#c4c4d2;-webkit-text-stroke:0.15px #c4c4d2;">0</span><span class="t" style="left:61.16px;top:372.98px;font-size:7.1px;line-height:8.88px;color:#c4c4d2;-webkit-text-stroke:0.15px #c4c4d2;">500</span><span class="t" style="left:57.22px;top:345.98px;font-size:7.1px;line-height:8.88px;color:#c4c4d2;-webkit-text-stroke:0.15px #c4c4d2;">1000</span><span class="t" style="left:57.22px;top:318.98px;font-size:7.1px;line-height:8.88px;color:#c4c4d2;-webkit-text-stroke:0.15px #c4c4d2;">1500</span><span class="t" style="left:57.22px;top:291.98px;font-size:7.1px;line-height:8.88px;color:#c4c4d2;-webkit-text-stroke:0.15px #c4c4d2;">2000</span><span class="t" style="left:74.80px;top:408.98px;font-size:7.1px;line-height:8.88px;color:#c4c4d2;-webkit-text-stroke:0.15px #c4c4d2;letter-spacing:-0.012px;">11:08:00</span><span class="t" style="left:143.70px;top:408.98px;font-size:7.1px;line-height:8.88px;color:#c4c4d2;-webkit-text-stroke:0.15px #c4c4d2;letter-spacing:-0.012px;">11:09:00</span><span class="t" style="left:212.60px;top:408.98px;font-size:7.1px;line-height:8.88px;color:#c4c4d2;-webkit-text-stroke:0.15px #c4c4d2;letter-spacing:-0.012px;">11:10:00</span><span class="t" style="left:281.50px;top:408.98px;font-size:7.1px;line-height:8.88px;color:#c4c4d2;-webkit-text-stroke:0.15px #c4c4d2;letter-spacing:0.055px;">11:11:00</span><span class="t" style="left:350.40px;top:408.98px;font-size:7.1px;line-height:8.88px;color:#c4c4d2;-webkit-text-stroke:0.15px #c4c4d2;letter-spacing:-0.012px;">11:12:00</span><span class="t" style="left:419.30px;top:408.98px;font-size:7.1px;line-height:8.88px;color:#c4c4d2;-webkit-text-stroke:0.15px #c4c4d2;letter-spacing:-0.012px;">11:13:00</span><span class="t" style="left:488.20px;top:408.98px;font-size:7.1px;line-height:8.88px;color:#c4c4d2;-webkit-text-stroke:0.15px #c4c4d2;letter-spacing:-0.012px;">11:14:00</span><span class="t" style="left:557.10px;top:408.98px;font-size:7.1px;line-height:8.88px;color:#c4c4d2;-webkit-text-stroke:0.15px #c4c4d2;letter-spacing:-0.012px;">11:15:00</span><span class="t" style="left:626.00px;top:408.98px;font-size:7.1px;line-height:8.88px;color:#c4c4d2;-webkit-text-stroke:0.15px #c4c4d2;letter-spacing:-0.012px;">11:16:00</span><span class="t" style="left:694.90px;top:408.98px;font-size:7.1px;line-height:8.88px;color:#c4c4d2;-webkit-text-stroke:0.15px #c4c4d2;letter-spacing:-0.012px;">11:17:00</span><span class="t" style="left:763.80px;top:408.98px;font-size:7.1px;line-height:8.88px;color:#c4c4d2;-webkit-text-stroke:0.15px #c4c4d2;letter-spacing:-0.012px;">11:18:00</span><span class="t" style="left:832.70px;top:408.98px;font-size:7.1px;line-height:8.88px;color:#c4c4d2;-webkit-text-stroke:0.15px #c4c4d2;letter-spacing:-0.012px;">11:19:00</span><span class="t" style="left:901.60px;top:408.98px;font-size:7.1px;line-height:8.88px;color:#c4c4d2;-webkit-text-stroke:0.15px #c4c4d2;letter-spacing:-0.012px;">11:20:00</span><span class="t" style="left:970.50px;top:408.98px;font-size:7.1px;line-height:8.88px;color:#c4c4d2;-webkit-text-stroke:0.15px #c4c4d2;letter-spacing:-0.012px;">11:21:00</span><span class="t" style="left:1039.40px;top:408.98px;font-size:7.1px;line-height:8.88px;color:#c4c4d2;-webkit-text-stroke:0.15px #c4c4d2;letter-spacing:-0.012px;">11:22:00</span>
<div class="b" style="left:66.7px;top:423.0px;width:8.5px;height:2.2px;background:#80c574;border-radius:1px;opacity:0.85;"></div><span class="t" style="left:79.90px;top:419.98px;font-size:7.1px;line-height:8.88px;color:#c4c4d2;-webkit-text-stroke:0.15px #c4c4d2;letter-spacing:-0.001px;">Successful</span><div class="b" style="left:120.2px;top:423.0px;width:8.5px;height:2.2px;background:#f2495c;border-radius:1px;opacity:0.85;"></div><span class="t" style="left:133.40px;top:419.98px;font-size:7.1px;line-height:8.88px;color:#c4c4d2;-webkit-text-stroke:0.15px #c4c4d2;letter-spacing:-0.055px;">Failed</span>
<!-- Avg Duration of Backend Requests -->
<div class="b" style="left:52.5px;top:437.3px;width:537.7px;height:172.9px;background:#1a1c20;border:1px solid #202227;box-sizing:border-box;border-radius:1.5px;"></div><span class="t" style="left:258.80px;top:443.98px;font-size:8.0px;line-height:10.0px;color:#d4d4e0;font-weight:700;letter-spacing:-0.263px;">Avg Duration of Backend Requests</span>
<svg class="b" style="left:0px;top:0px;" width="1136" height="668" viewBox="0 0 1136 668"><path d="M85.8 593.60H570.5" stroke="rgba(204,204,220,0.045)" stroke-width="1"/><path d="M85.8 573.50H570.5" stroke="rgba(204,204,220,0.045)" stroke-width="1"/><path d="M85.8 553.40H570.5" stroke="rgba(204,204,220,0.045)" stroke-width="1"/><path d="M85.8 533.30H570.5" stroke="rgba(204,204,220,0.045)" stroke-width="1"/><path d="M85.8 513.20H570.5" stroke="rgba(204,204,220,0.045)" stroke-width="1"/><path d="M85.8 493.10H570.5" stroke="rgba(204,204,220,0.045)" stroke-width="1"/><path d="M85.8 473.00H570.5" stroke="rgba(204,204,220,0.045)" stroke-width="1"/><path d="M155.60 473.0V593.6" stroke="rgba(204,204,220,0.045)" stroke-width="1"/><path d="M316.60 473.0V593.6" stroke="rgba(204,204,220,0.045)" stroke-width="1"/><path d="M477.60 473.0V593.6" stroke="rgba(204,204,220,0.045)" stroke-width="1"/><path d="M85.80 593.60L91.20 593.60L123.40 572.29L155.60 485.06L187.80 593.60L220.00 593.60L252.20 593.60L284.40 566.47L316.60 590.59L348.80 576.31L381.00 581.24L413.20 578.32L445.40 593.60L477.60 593.60L509.80 593.60" fill="none" stroke="#80c574" stroke-width="0.9" stroke-linejoin="round" stroke-opacity="0.72"/><circle cx="91.20" cy="593.60" r="1.15" fill="#a2d699"/><circle cx="123.40" cy="572.29" r="1.15" fill="#a2d699"/><circle cx="155.60" cy="485.06" r="1.15" fill="#a2d699"/><circle cx="187.80" cy="593.60" r="1.15" fill="#a2d699"/><circle cx="220.00" cy="593.60" r="1.15" fill="#a2d699"/><circle cx="252.20" cy="593.60" r="1.15" fill="#a2d699"/><circle cx="284.40" cy="566.47" r="1.15" fill="#a2d699"/><circle cx="316.60" cy="590.59" r="1.15" fill="#a2d699"/><circle cx="348.80" cy="576.31" r="1.15" fill="#a2d699"/><circle cx="381.00" cy="581.24" r="1.15" fill="#a2d699"/><circle cx="413.20" cy="578.32" r="1.15" fill="#a2d699"/><circle cx="445.40" cy="593.60" r="1.15" fill="#a2d699"/><circle cx="477.60" cy="593.60" r="1.15" fill="#a2d699"/><circle cx="509.80" cy="593.60" r="1.15" fill="#a2d699"/></svg>
<span class="t" style="left:65.03px;top:589.97px;font-size:7.1px;line-height:8.88px;color:#c4c4d2;-webkit-text-stroke:0.15px #c4c4d2;">0 ms</span><span class="t" style="left:57.13px;top:568.97px;font-size:7.1px;line-height:8.88px;color:#c4c4d2;-webkit-text-stroke:0.15px #c4c4d2;">200 ms</span><span class="t" style="left:57.13px;top:548.97px;font-size:7.1px;line-height:8.88px;color:#c4c4d2;-webkit-text-stroke:0.15px #c4c4d2;">400 ms</span><span class="t" style="left:57.13px;top:528.97px;font-size:7.1px;line-height:8.88px;color:#c4c4d2;-webkit-text-stroke:0.15px #c4c4d2;">600 ms</span><span class="t" style="left:57.13px;top:508.97px;font-size:7.1px;line-height:8.88px;color:#c4c4d2;-webkit-text-stroke:0.15px #c4c4d2;">800 ms</span><span class="t" style="left:70.93px;top:488.98px;font-size:7.1px;line-height:8.88px;color:#c4c4d2;-webkit-text-stroke:0.15px #c4c4d2;">1 s</span><span class="t" style="left:61.07px;top:468.98px;font-size:7.1px;line-height:8.88px;color:#c4c4d2;-webkit-text-stroke:0.15px #c4c4d2;">1.20 s</span><span class="t" style="left:146.98px;top:597.97px;font-size:7.1px;line-height:8.88px;color:#c4c4d2;-webkit-text-stroke:0.15px #c4c4d2;">11:10</span><span class="t" style="left:307.98px;top:597.97px;font-size:7.1px;line-height:8.88px;color:#c4c4d2;-webkit-text-stroke:0.15px #c4c4d2;">11:15</span><span class="t" style="left:468.98px;top:597.97px;font-size:7.1px;line-height:8.88px;color:#c4c4d2;-webkit-text-stroke:0.15px #c4c4d2;">11:20</span>
<!-- Requests by Response Code -->
<div class="b" style="left:595px;top:437.3px;width:537.3px;height:172.9px;background:#1a1c20;border:1px solid #202227;box-sizing:border-box;border-radius:1.5px;"></div><span class="t" style="left:811.90px;top:443.98px;font-size:8.0px;line-height:10.0px;color:#d4d4e0;font-weight:700;letter-spacing:-0.270px;">Requests by Response Code</span>
<svg class="b" style="left:0px;top:0px;" width="1136" height="668" viewBox="0 0 1136 668"><path d="M625.0 581.10H1111.0" stroke="rgba(204,204,220,0.045)" stroke-width="1"/><path d="M625.0 554.17H1111.0" stroke="rgba(204,204,220,0.045)" stroke-width="1"/><path d="M625.0 527.25H1111.0" stroke="rgba(204,204,220,0.045)" stroke-width="1"/><path d="M625.0 500.32H1111.0" stroke="rgba(204,204,220,0.045)" stroke-width="1"/><path d="M625.0 473.40H1111.0" stroke="rgba(204,204,220,0.045)" stroke-width="1"/><path d="M694.78 473.4V581.1" stroke="rgba(204,204,220,0.045)" stroke-width="1"/><path d="M857.23 473.4V581.1" stroke="rgba(204,204,220,0.045)" stroke-width="1"/><path d="M1019.68 473.4V581.1" stroke="rgba(204,204,220,0.045)" stroke-width="1"/><path d="M857.23 581.10L889.72 525.63L922.21 484.17L954.70 563.06L987.19 581.10" fill="none" stroke="#80c574" stroke-width="0.9" stroke-linejoin="round" stroke-opacity="0.72"/><circle cx="889.72" cy="525.63" r="1.15" fill="#a2d699"/><circle cx="922.21" cy="484.17" r="1.15" fill="#a2d699"/><circle cx="954.70" cy="563.06" r="1.15" fill="#a2d699"/><path d="M625.00 581.10L629.80 581.10L662.29 581.10L694.78 581.10L727.27 581.10L759.76 581.10L792.25 581.10L824.74 581.10L857.23 581.10L889.72 581.10L922.21 581.10L954.70 581.10L987.19 581.10L1019.68 581.10L1052.17 581.10" fill="none" stroke="#8ab8ff" stroke-width="1.0" stroke-linejoin="round" stroke-opacity="0.6"/><circle cx="629.80" cy="581.10" r="1.25" fill="#b9d2fb"/><circle cx="662.29" cy="581.10" r="1.25" fill="#b9d2fb"/><circle cx="694.78" cy="581.10" r="1.25" fill="#b9d2fb"/><circle cx="727.27" cy="581.10" r="1.25" fill="#b9d2fb"/><circle cx="759.76" cy="581.10" r="1.25" fill="#b9d2fb"/><circle cx="792.25" cy="581.10" r="1.25" fill="#b9d2fb"/><circle cx="824.74" cy="581.10" r="1.25" fill="#b9d2fb"/><circle cx="857.23" cy="581.10" r="1.25" fill="#b9d2fb"/><circle cx="889.72" cy="581.10" r="1.25" fill="#b9d2fb"/><circle cx="922.21" cy="581.10" r="1.25" fill="#b9d2fb"/><circle cx="954.70" cy="581.10" r="1.25" fill="#b9d2fb"/><circle cx="987.19" cy="581.10" r="1.25" fill="#b9d2fb"/><circle cx="1019.68" cy="581.10" r="1.25" fill="#b9d2fb"/><circle cx="1052.17" cy="581.10" r="1.25" fill="#b9d2fb"/></svg>
<span class="t" style="left:615.55px;top:576.97px;font-size:7.1px;line-height:8.88px;color:#c4c4d2;-webkit-text-stroke:0.15px #c4c4d2;">0</span><span class="t" style="left:607.66px;top:549.97px;font-size:7.1px;line-height:8.88px;color:#c4c4d2;-webkit-text-stroke:0.15px #c4c4d2;">500</span><span class="t" style="left:608.84px;top:522.97px;font-size:7.1px;line-height:8.88px;color:#c4c4d2;-webkit-text-stroke:0.15px #c4c4d2;">1 K</span><span class="t" style="left:598.98px;top:495.98px;font-size:7.1px;line-height:8.88px;color:#c4c4d2;-webkit-text-stroke:0.15px #c4c4d2;">1.50 K</span><span class="t" style="left:608.84px;top:468.98px;font-size:7.1px;line-height:8.88px;color:#c4c4d2;-webkit-text-stroke:0.15px #c4c4d2;">2 K</span><span class="t" style="left:686.16px;top:584.97px;font-size:7.1px;line-height:8.88px;color:#c4c4d2;-webkit-text-stroke:0.15px #c4c4d2;">11:10</span><span class="t" style="left:848.61px;top:584.97px;font-size:7.1px;line-height:8.88px;color:#c4c4d2;-webkit-text-stroke:0.15px #c4c4d2;">11:15</span><span class="t" style="left:1011.06px;top:584.97px;font-size:7.1px;line-height:8.88px;color:#c4c4d2;-webkit-text-stroke:0.15px #c4c4d2;">11:20</span>
<div class="b" style="left:608.8px;top:599.3px;width:8.5px;height:2.2px;background:#80c574;border-radius:1px;opacity:0.85;"></div><span class="t" style="left:622.00px;top:596.97px;font-size:7.1px;line-height:8.88px;color:#c4c4d2;-webkit-text-stroke:0.15px #c4c4d2;letter-spacing:-0.065px;">Requests 200</span><div class="b" style="left:670.9px;top:599.3px;width:8.5px;height:2.2px;background:#f2495c;border-radius:1px;opacity:0.85;"></div><span class="t" style="left:684.10px;top:596.97px;font-size:7.1px;line-height:8.88px;color:#c4c4d2;-webkit-text-stroke:0.15px #c4c4d2;letter-spacing:-0.065px;">Requests 404</span><div class="b" style="left:733.0px;top:599.3px;width:8.5px;height:2.2px;background:#8ab8ff;border-radius:1px;opacity:0.85;"></div><span class="t" style="left:746.20px;top:596.97px;font-size:7.1px;line-height:8.88px;color:#c4c4d2;-webkit-text-stroke:0.15px #c4c4d2;letter-spacing:-0.065px;">Requests 500</span>
<!-- collapsed rows -->
<div class="b" style="left:52.5px;top:614.9px;width:1080px;height:17.2px;background:#191b1f;border-radius:1.5px;"></div><svg class="b" style="left:54.4px;top:620.9px" width="5.4" height="5.4" viewBox="0 0 24 24" fill="none" stroke="#b8b8c6" stroke-width="4.22" stroke-linecap="round" stroke-linejoin="round"><path d="M9 5.500l6.500 6.500L9 18.500"/></svg><span class="t" style="left:61.90px;top:618.98px;font-size:9.0px;line-height:11.25px;color:#dcdce8;font-weight:700;letter-spacing:-0.117px;">API, Operations, Requests (Log Analytics Enabled)</span><span class="t" style="left:283.40px;top:620.98px;font-size:6.6px;line-height:8.25px;color:#8e8e9c;font-style:italic;letter-spacing:0.167px;">(3 panels)</span><svg class="b" style="left:1124.6px;top:618.5px;" width="5" height="10" viewBox="0 0 5 10"><circle cx="1" cy="0.8" r="0.55" fill="#55575f"/><circle cx="1" cy="4.0" r="0.55" fill="#55575f"/><circle cx="1" cy="7.2" r="0.55" fill="#55575f"/><circle cx="1" cy="10.4" r="0.55" fill="#55575f"/><circle cx="4.2" cy="0.8" r="0.55" fill="#55575f"/><circle cx="4.2" cy="4.0" r="0.55" fill="#55575f"/><circle cx="4.2" cy="7.2" r="0.55" fill="#55575f"/><circle cx="4.2" cy="10.4" r="0.55" fill="#55575f"/></svg>
<div class="b" style="left:52.5px;top:636.5px;width:1080px;height:17.2px;background:#191b1f;border-radius:1.5px;"></div><svg class="b" style="left:54.4px;top:642.5px" width="5.4" height="5.4" viewBox="0 0 24 24" fill="none" stroke="#b8b8c6" stroke-width="4.22" stroke-linecap="round" stroke-linejoin="round"><path d="M9 5.500l6.500 6.500L9 18.500"/></svg><span class="t" style="left:61.90px;top:640.98px;font-size:9.0px;line-height:11.25px;color:#dcdce8;font-weight:700;letter-spacing:-0.070px;">Health (App Insights Enabled)</span><span class="t" style="left:197.40px;top:642.98px;font-size:6.6px;line-height:8.25px;color:#8e8e9c;font-style:italic;letter-spacing:0.182px;">(13 panels)</span><svg class="b" style="left:1124.6px;top:640.1px;" width="5" height="10" viewBox="0 0 5 10"><circle cx="1" cy="0.8" r="0.55" fill="#55575f"/><circle cx="1" cy="4.0" r="0.55" fill="#55575f"/><circle cx="1" cy="7.2" r="0.55" fill="#55575f"/><circle cx="1" cy="10.4" r="0.55" fill="#55575f"/><circle cx="4.2" cy="0.8" r="0.55" fill="#55575f"/><circle cx="4.2" cy="4.0" r="0.55" fill="#55575f"/><circle cx="4.2" cy="7.2" r="0.55" fill="#55575f"/><circle cx="4.2" cy="10.4" r="0.55" fill="#55575f"/></svg>
<div class="b" style="left:52.5px;top:658.4px;width:1080px;height:17.2px;background:#191b1f;border-radius:1.5px;"></div><svg class="b" style="left:54.4px;top:664.4px" width="5.4" height="5.4" viewBox="0 0 24 24" fill="none" stroke="#b8b8c6" stroke-width="4.22" stroke-linecap="round" stroke-linejoin="round"><path d="M9 5.500l6.500 6.500L9 18.500"/></svg><span class="t" style="left:61.90px;top:661.98px;font-size:9.0px;line-height:11.25px;color:#dcdce8;font-weight:700;letter-spacing:-0.107px;">Operations (App Insights Enabled)</span><span class="t" style="left:215.90px;top:663.98px;font-size:6.6px;line-height:8.25px;color:#8e8e9c;font-style:italic;letter-spacing:0.167px;">(3 panels)</span><svg class="b" style="left:1124.6px;top:662.0px;" width="5" height="10" viewBox="0 0 5 10"><circle cx="1" cy="0.8" r="0.55" fill="#55575f"/><circle cx="1" cy="4.0" r="0.55" fill="#55575f"/><circle cx="1" cy="7.2" r="0.55" fill="#55575f"/><circle cx="1" cy="10.4" r="0.55" fill="#55575f"/><circle cx="4.2" cy="0.8" r="0.55" fill="#55575f"/><circle cx="4.2" cy="4.0" r="0.55" fill="#55575f"/><circle cx="4.2" cy="7.2" r="0.55" fill="#55575f"/><circle cx="4.2" cy="10.4" r="0.55" fill="#55575f"/></svg>
<svg class="b" style="left:969.3px;top:63.2px" width="11" height="15" viewBox="0 0 11 15"><path d="M1.200 1v11.200l2.700-2.500 1.900 4.200 1.800-.8-1.900-4.100h3.600z" fill="#050506" stroke="#f4f4f8" stroke-width="1" stroke-linejoin="round"/></svg>
</div>
</body></html>
